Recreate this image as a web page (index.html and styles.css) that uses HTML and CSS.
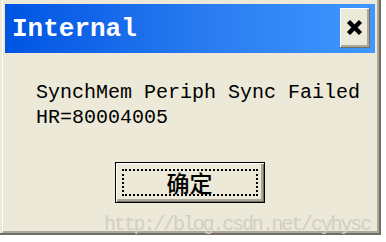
FILE: index.html
```html
<!DOCTYPE html>
<html lang="zh-CN">
<head>
    <meta charset="UTF-8">
    <title>Internal</title>
    <link rel="stylesheet" href="styles.css">
</head>
<body>

    <div class="dialog">
        <div class="frame">
            <div class="titlebar">
                <span class="title">Internal</span>
                <button class="close-btn" title="Close">
                    <svg width="17" height="17" viewBox="0 0 17 17">
                        <path d="M2.5 2.5 L14.5 14.5 M14.5 2.5 L2.5 14.5" stroke="#000" stroke-width="4.5" fill="none"/>
                    </svg>
                </button>
            </div>

            <div class="message">
                <p>SynchMem Periph Sync Failed</p>
                <p>HR=80004005</p>
            </div>

            <div class="actions">
                <button class="ok-btn"><span class="focus">确定</span></button>
            </div>
        </div>
        <div class="watermark">http://blog.csdn.net/cyhysc</div>
    </div>

</body>
</html>
```

FILE: styles.css
```css
body {
    margin: 0;
    padding: 0;
    background: #fff;
    font-family: "Liberation Mono", monospace;
}

.dialog {
    position: relative;
    width: 381px;
    height: 235px;
    box-sizing: border-box;
    background: #ece9d8;
    border-right: 2px solid #716f64;
    border-bottom: 2px solid #716f64;
    padding-left: 2px;
}

.frame {
    height: 100%;
    box-sizing: border-box;
    border-left: 1px solid #fff;
    border-right: 2px solid #aca899;
    border-bottom: 2px solid #aca899;
    padding: 4px 2px 0 2px;
}

.titlebar {
    height: 49px;
    display: flex;
    align-items: center;
    justify-content: space-between;
    padding: 0 5px 0 7px;
    background: linear-gradient(to right, #0054e3, #2a7cf0 55%, #3f97ff);
}

.title {
    color: #fff;
    font-weight: bold;
    font-size: 26px;
}

.close-btn {
    width: 30px;
    height: 40px;
    margin-top: -1px;
    padding: 0;
    display: flex;
    align-items: center;
    justify-content: center;
    background: #ece9d8;
    border: none;
    border-right: 1px solid #716f64;
    border-bottom: 1px solid #716f64;
    box-shadow: inset 1px 1px #fff, inset -2px -2px #aca899;
}

.message {
    padding: 27px 0 0 31px;
    font-size: 20px;
    line-height: 25px;
    color: #000;
}

.message p {
    margin: 0;
}

.actions {
    display: flex;
    justify-content: center;
    margin-top: 32px;
}

.ok-btn {
    width: 150px;
    height: 41px;
    padding: 6px;
    margin-left: -1px;
    background: #ece9d8;
    border: 1px solid #000;
    box-shadow: inset 1px 1px #fff, inset -1px -1px #716f64, inset -3px -3px #aca899;
    display: flex;
}

.focus {
    flex: 1;
    display: flex;
    align-items: center;
    justify-content: center;
    border: 2px dotted #000;
    font-family: "Noto Sans CJK SC", sans-serif;
    font-size: 23px;
    font-weight: 500;
    line-height: 1;
    color: #000;
}

.watermark {
    position: absolute;
    left: 104px;
    top: 215px;
    font-size: 20px;
    line-height: 20px;
    letter-spacing: -2.15px;
    color: #d2cfc2;
    white-space: nowrap;
}
```
